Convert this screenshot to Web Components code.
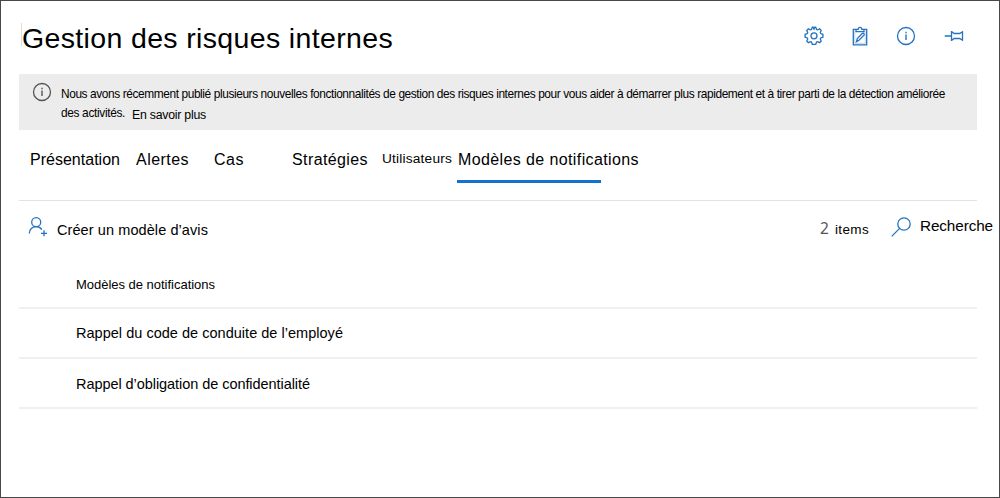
<!DOCTYPE html>
<html lang="fr">
<head>
<meta charset="utf-8">
<title>Gestion des risques internes</title>
<style>
html,body{margin:0;height:100%;overflow:hidden;background:#fff}
body{font-family:"Liberation Sans",Arial,sans-serif;color:#000}
</style>
</head>
<body>
<risk-app></risk-app>
<script>
// Single-line label; "fit" spreads the letters evenly over the given width.
class UiLabel extends HTMLElement {
  constructor() {
    super();
    this.attachShadow({mode: 'open'}).innerHTML = `
      <style>:host{display:block;flex:none;white-space:nowrap;line-height:20px}span{display:inline-block}</style>
      <span><slot></slot></span>`;
  }
  connectedCallback() {
    const fit = parseFloat(this.getAttribute('fit'));
    this.style.fontSize = this.getAttribute('size') + 'px';
    if (!fit) return;
    this.style.width = fit + 'px';
    const span = this.shadowRoot.querySelector('span');
    const nodes = this.shadowRoot.querySelector('slot').assignedNodes({flatten: true});
    const n = nodes.map(x => x.textContent).join('').length;
    span.style.letterSpacing = '0px';
    const w = span.getBoundingClientRect().width;
    span.style.letterSpacing = ((fit - w) / n) + 'px';
  }
}

const ICONS = {
  gear: '<path d="M8.3 1.2h.9l.8 1.9.8-1.9h.9l.9 2.3 1 .4 2-1 1.6 1.6-.9 2.1.4.9 2.2.8v2.9l-2.2.8-.4 1 .9 2-1.6 1.7-2-1-1 .4-.9 2.3H8.3l-.8-2.3-1-.4-2.1 1-1.6-1.7.9-2-.4-1-2.2-.8V8.3l2.2-.8.4-.9-.9-2.1 1.6-1.6 2.1 1 1-.4z"/><circle cx="10" cy="9.8" r="3"/>',
  clip: '<path d="M6.7 3.4H3.3v15.4h13.4V3.4h-3.4M6 5.6h8V3.3h-2.2C11.7.6 8.3.6 8.2 3.3H6zM6.5 15.6l.8-3 5-5.1c1.2-.8 2.5.5 1.7 1.7l-5 5z"/><path d="M4.8 5v12.3h10.4V5" stroke-width=".5" opacity=".6"/>',
  info: '<circle cx="10" cy="10" r="8.5"/><path d="M10 8.4v5.5M10 5.7v1.5" stroke-width="1.4"/>',
  pin: '<path d="M.7 10h6.8M7.5 5v10M7.5 5.6l2.7 1.9h5.3l3-1.6v8.2l-3-1.6h-5.3l-2.7 1.9"/>',
  person: '<circle cx="8.2" cy="6.2" r="4.5"/><path d="M1.3 17.5c0-4.1 3-6.8 6.9-6.8 2.5 0 4.5 1.2 5.6 3M13 17.3h6M16 14.3v6"/>',
  search: '<circle cx="13" cy="7" r="6.2"/><path d="M8.6 11.4.7 19.4"/>'
};
class UiIcon extends HTMLElement {
  constructor() {
    super();
    this.attachShadow({mode: 'open'}).innerHTML = `
      <style>:host{display:block;flex:none;width:20px;height:20px;color:#2472c0}
      svg{display:block;width:100%;height:100%;overflow:visible;fill:none;stroke:currentColor;stroke-width:1.3}</style>
      <svg viewBox="0 0 20 20">${ICONS[this.getAttribute('name')]}</svg>`;
  }
}

class PageHeader extends HTMLElement {
  constructor() {
    super();
    this.attachShadow({mode: 'open'}).innerHTML = `
      <style>
      :host{display:flex;height:73px;box-sizing:border-box;padding:17px 35px 0 2px}
      ui-label{line-height:40px}
      :host::before{content:"";width:1px;height:23px;margin-top:5px;background:#ddd}
      nav{display:flex;gap:26px;margin:8px 0 0 auto}
      </style>
      <ui-label size="28.5" fit="371"><slot></slot></ui-label>
      <nav><ui-icon name="gear"></ui-icon><ui-icon name="clip"></ui-icon><ui-icon name="info"></ui-icon><ui-icon name="pin" style="margin-left:2px"></ui-icon></nav>`;
  }
}

class InfoBanner extends HTMLElement {
  constructor() {
    super();
    this.attachShadow({mode: 'open'}).innerHTML = `
      <style>
      :host{display:flex;width:958px;height:56px;box-sizing:border-box;background:#ececec;padding:8px 0 0 13px;gap:9px}
      ui-icon{color:#555}
      .copy{padding-top:2px}
      .line{display:flex;gap:7px;margin-top:-1px}
      .line ui-label + ui-label{padding-top:2px}
      </style>
      <ui-icon name="info"></ui-icon>
      <div class="copy">
        <ui-label size="11.9" fit="884">Nous avons récemment publié plusieurs nouvelles fonctionnalités de gestion des risques internes pour vous aider à démarrer plus rapidement et à tirer parti de la détection améliorée</ui-label>
        <div class="line"><ui-label size="11.9" fit="64">des activités.</ui-label><ui-label size="12.3" fit="74">En savoir plus</ui-label></div>
      </div>`;
  }
}

class TabBar extends HTMLElement {
  constructor() {
    super();
    this.attachShadow({mode: 'open'}).innerHTML = `
      <style>
      :host{display:flex;width:958px;height:71px;box-sizing:border-box;padding:20px 0 0 11px;border-bottom:1px solid #e3e3e3}
      .active{width:181px;height:33px;display:grid;grid-template-rows:30px 2.5px}
      .active i{width:144px;background:#1272ce;margin-left:-1px}
      </style>
      <ui-label size="16" fit="90">Présentation</ui-label>
      <ui-label size="16" fit="53" style="margin-left:16px">Alertes</ui-label>
      <ui-label size="16" fit="30" style="margin-left:25px">Cas</ui-label>
      <ui-label size="16" fit="76" style="margin-left:48px">Stratégies</ui-label>
      <ui-label size="13.7" fit="70" style="margin:-1px 0 0 14px">Utilisateurs</ui-label>
      <div class="active" style="margin-left:6px"><ui-label size="16" fit="181">Modèles de notifications</ui-label><i></i></div>`;
  }
}

class ToolBar extends HTMLElement {
  constructor() {
    super();
    this.attachShadow({mode: 'open'}).innerHTML = `
      <style>
      :host{display:flex;height:59px;box-sizing:border-box;padding:15px 6px 0 9px}
      .count{font-family:"Noto Sans",sans-serif;color:#555;margin:2px 0 0 auto}
      </style>
      <ui-icon name="person"></ui-icon>
      <ui-label size="14.5" fit="151" style="margin:4px 0 0 9px">Créer un modèle d’avis</ui-label>
      <ui-label class="count" size="15.5" fit="9">2</ui-label>
      <ui-label size="13.5" fit="34" style="margin:4px 1px 0 6px">items</ui-label>
      <ui-icon name="search" style="margin:1px 0 0 21px"></ui-icon>
      <ui-label size="15.3" fit="73" style="margin-left:9px">Recherche</ui-label>`;
  }
}

class TemplateRow extends HTMLElement {
  constructor() {
    super();
    this.attachShadow({mode: 'open'}).innerHTML = `
      <style>
      :host{display:flex;align-items:center;width:958px;height:50px;box-sizing:border-box;padding-left:57px;border-bottom:2px solid #f0f0f0;color:#000}
      </style><slot></slot>`;
  }
}

class RiskApp extends HTMLElement {
  constructor() {
    super();
    this.attachShadow({mode: 'open'}).innerHTML = `
      <style>
      :host{display:block;width:1000px;height:498px;box-sizing:border-box;border:1px solid #484848;background:#fff;padding-left:18px}
      </style>
      <page-header>Gestion des risques internes</page-header>
      <info-banner></info-banner>
      <tab-bar></tab-bar>
      <tool-bar></tool-bar>
      <template-row style="height:49px;padding-top:2px"><ui-label size="13" fit="139">Modèles de notifications</ui-label></template-row>
      <template-row><ui-label size="14.5" fit="267">Rappel du code de conduite de l’employé</ui-label></template-row>
      <template-row style="padding-top:2px"><ui-label size="14.5" fit="234">Rappel d’obligation de confidentialité</ui-label></template-row>`;
  }
}

customElements.define('ui-label', UiLabel);
customElements.define('ui-icon', UiIcon);
customElements.define('page-header', PageHeader);
customElements.define('info-banner', InfoBanner);
customElements.define('tab-bar', TabBar);
customElements.define('tool-bar', ToolBar);
customElements.define('template-row', TemplateRow);
customElements.define('risk-app', RiskApp);
</script>
</body>
</html>
